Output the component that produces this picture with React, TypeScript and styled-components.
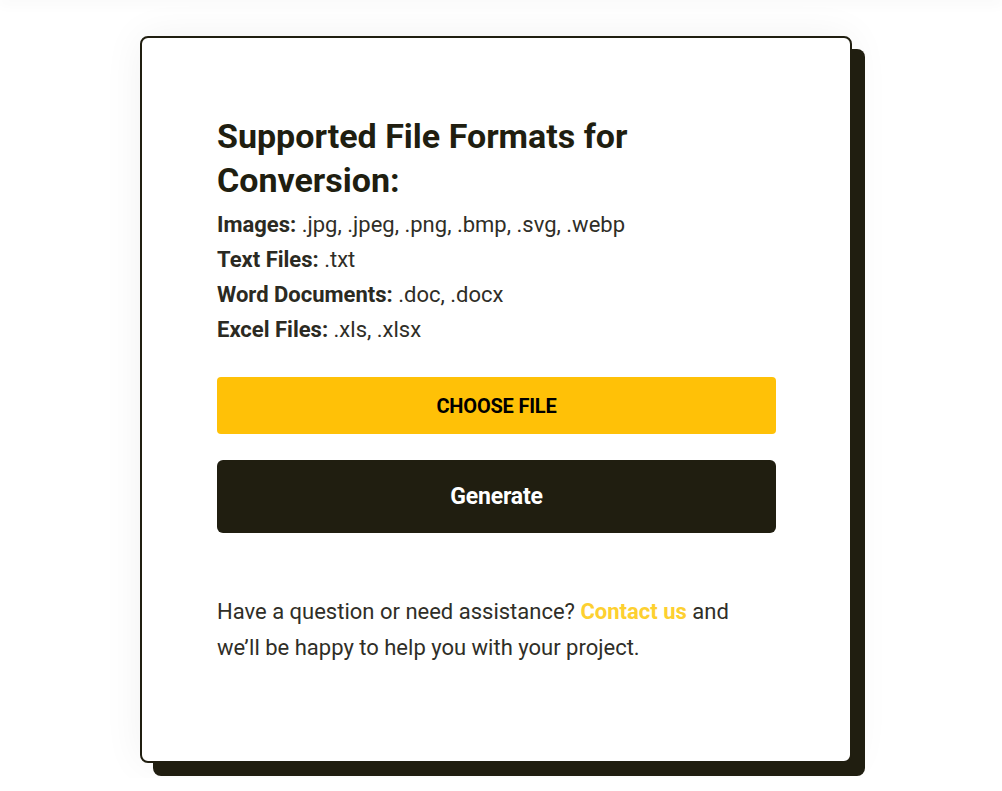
import React from "react";
import styled, { createGlobalStyle } from "styled-components";

const GlobalStyle = createGlobalStyle`
  * { box-sizing: border-box; }
  body {
    margin: 0;
    background: #fff;
    font-family: Roboto, "Liberation Sans", sans-serif;
    color: #2b2a22;
  }
`;

const TopShade = styled.div`
  height: 0;
  box-shadow: 0 0 14px 2px rgba(0, 0, 0, 0.07);
`;

const Page = styled.main`
  padding: 36px 0 15px 140px;
`;

const Card = styled.section`
  width: 712px;
  background: #fff;
  border: 2px solid #201e10;
  border-radius: 8px;
  box-shadow: 13px 13px 0 #201e10, 0 0 40px rgba(0, 0, 0, 0.06);
  padding: 76px 74px 95px 75px;
`;

const Title = styled.h2`
  margin: 0 0 5px;
  font-size: 34px;
  line-height: 44px;
  font-weight: 700;
  color: #201e10;
  max-width: 450px;
`;

const FormatList = styled.div`
  display: flex;
  flex-direction: column;
  margin-bottom: 30px;
`;

const FormatRow = styled.div`
  font-size: 22px;
  line-height: 35px;
  color: #2f2e27;
  b { font-weight: 700; color: #2b2a22; }
`;

const Button = styled.button<{ $dark?: boolean }>`
  display: block;
  width: 100%;
  border: none;
  cursor: pointer;
  font-family: Roboto, "Liberation Sans", sans-serif;
  font-weight: 700;
  background: ${p => (p.$dark ? "#201e10" : "#ffc107")};
  color: ${p => (p.$dark ? "#fff" : "#000")};
  height: ${p => (p.$dark ? "73px" : "57px")};
  border-radius: ${p => (p.$dark ? "6px" : "4px")};
  font-size: ${p => (p.$dark ? "23px" : "20px")};
  letter-spacing: -0.2px;
  margin-bottom: ${p => (p.$dark ? "61px" : "26px")};
`;

const Help = styled.p`
  margin: 0;
  font-size: 22px;
  line-height: 36px;
  color: #2f2e27;
  max-width: 530px;
`;

const Link = styled.a`
  color: #fdd030;
  font-weight: 700;
  text-decoration: none;
`;

const formats = [
  ["Images:", ".jpg, .jpeg, .png, .bmp, .svg, .webp"],
  ["Text Files:", ".txt"],
  ["Word Documents:", ".doc, .docx"],
  ["Excel Files:", ".xls, .xlsx"],
];

export default function App() {
  return (
    <>
      <GlobalStyle />
      <TopShade />
      <Page>
        <Card>
          <Title>Supported File Formats for Conversion:</Title>
          <FormatList>
            {formats.map(([k, v]) => (
              <FormatRow key={k}>
                <b>{k}</b> {v}
              </FormatRow>
            ))}
          </FormatList>
          <Button>CHOOSE FILE</Button>
          <Button $dark>Generate</Button>
          <Help>
            Have a question or need assistance? <Link href="#">Contact us</Link> and
            we’ll be happy to help you with your project.
          </Help>
        </Card>
      </Page>
    </>
  );
}
